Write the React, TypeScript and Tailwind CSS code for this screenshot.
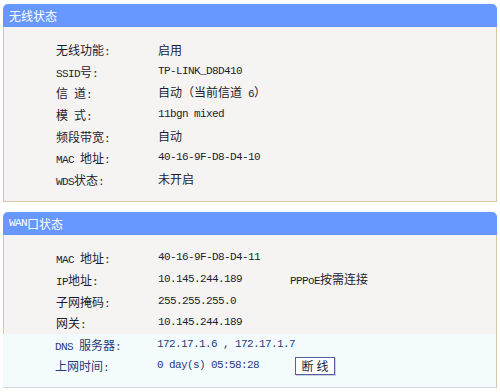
import React from 'react';

// split text into ascii and cjk runs so the ascii part uses the narrow mono face
function Mixed({ text }: { text: string }) {
  const parts = text.match(/[\x00-\x7f]+|[^\x00-\x7f]+/g) || [];
  return (
    <>
      {parts.map((p, i) =>
        /^[\x00-\x7f]+$/.test(p) ? (
          <span key={i} className="font-['Liberation_Mono',monospace] text-[11px] tracking-[-0.6px] whitespace-pre">{p}</span>
        ) : (
          <span key={i} className="font-['Noto_Sans_CJK_SC',sans-serif] text-[12px]">{p}</span>
        )
      )}
    </>
  );
}

type Row = { label: string; value: string; extra?: React.ReactNode };

function Rows({ rows, tone = 'text-[#1c1c30]' }: { rows: Row[]; tone?: string }) {
  return (
    <div className={tone}>
      {rows.map((r) => (
        <div key={r.label} className="flex h-[21.6px] items-center leading-none">
          <div className="w-[102px] pl-[52px] box-content shrink-0">
            <Mixed text={r.label} />
          </div>
          <div className="flex items-baseline">
            <Mixed text={r.value} />
          </div>
          {r.extra}
        </div>
      ))}
    </div>
  );
}

function Header({ title }: { title: string }) {
  return (
    <div className="h-[23px] rounded-t-[5px] bg-[#6798ff] pl-[6px] flex items-center text-white leading-none">
      <Mixed text={title} />
    </div>
  );
}

export default function App() {
  const wireless: Row[] = [
    { label: '无线功能:', value: '启用' },
    { label: 'SSID号:', value: 'TP-LINK_D8D410' },
    { label: '信 道:', value: '自动（当前信道 6）' },
    { label: '模 式:', value: '11bgn mixed' },
    { label: '频段带宽:', value: '自动' },
    { label: 'MAC 地址:', value: '40-16-9F-D8-D4-10' },
    { label: 'WDS状态:', value: '未开启' },
  ];

  const wanTop: Row[] = [
    { label: 'MAC 地址:', value: '40-16-9F-D8-D4-11' },
    {
      label: 'IP地址:',
      value: '10.145.244.189',
      extra: (
        <div className="ml-[48px] flex items-baseline">
          <Mixed text="PPPoE按需连接" />
        </div>
      ),
    },
    { label: '子网掩码:', value: '255.255.255.0' },
    { label: '网关:', value: '10.145.244.189' },
  ];

  const wanBottom: Row[] = [
    { label: 'DNS 服务器:', value: '172.17.1.6 , 172.17.1.7' },
    {
      label: '上网时间:',
      value: '0 day(s) 05:58:28',
      extra: (
        <button className="ml-[36px] h-[18px] w-[40px] border border-[#55609a] bg-white text-[#1c1c30] flex items-center justify-center leading-none tracking-[3px] pl-[3px] shadow-[1px_1px_0_#c9cfe0]">
          <Mixed text="断线" />
        </button>
      ),
    },
  ];

  return (
    <div className="w-[500px] h-[392px] bg-white pt-[4px] px-[3px] overflow-hidden">
      <div className="w-[494px]">
        <Header title="无线状态" />
        <div className="bg-[#f6f4f3] border-x border-b border-[#d8c7a6] pt-[12px] pb-[11px]">
          <Rows rows={wireless} />
        </div>
      </div>

      <div className="w-[494px] mt-[10px]">
        <Header title="WAN口状态" />
        <div className="border-r border-b border-r-[#d8c7a6] border-b-[#d5d8dc]">
          <div className="bg-[#f6f4f3] border-l border-[#d8c7a6] pt-[12px]">
            <Rows rows={wanTop} />
          </div>
          <div className="bg-[#f4fbfd] pb-[10px]">
            <Rows rows={wanBottom} tone="text-[#263a78]" />
          </div>
        </div>
      </div>
    </div>
  );
}
